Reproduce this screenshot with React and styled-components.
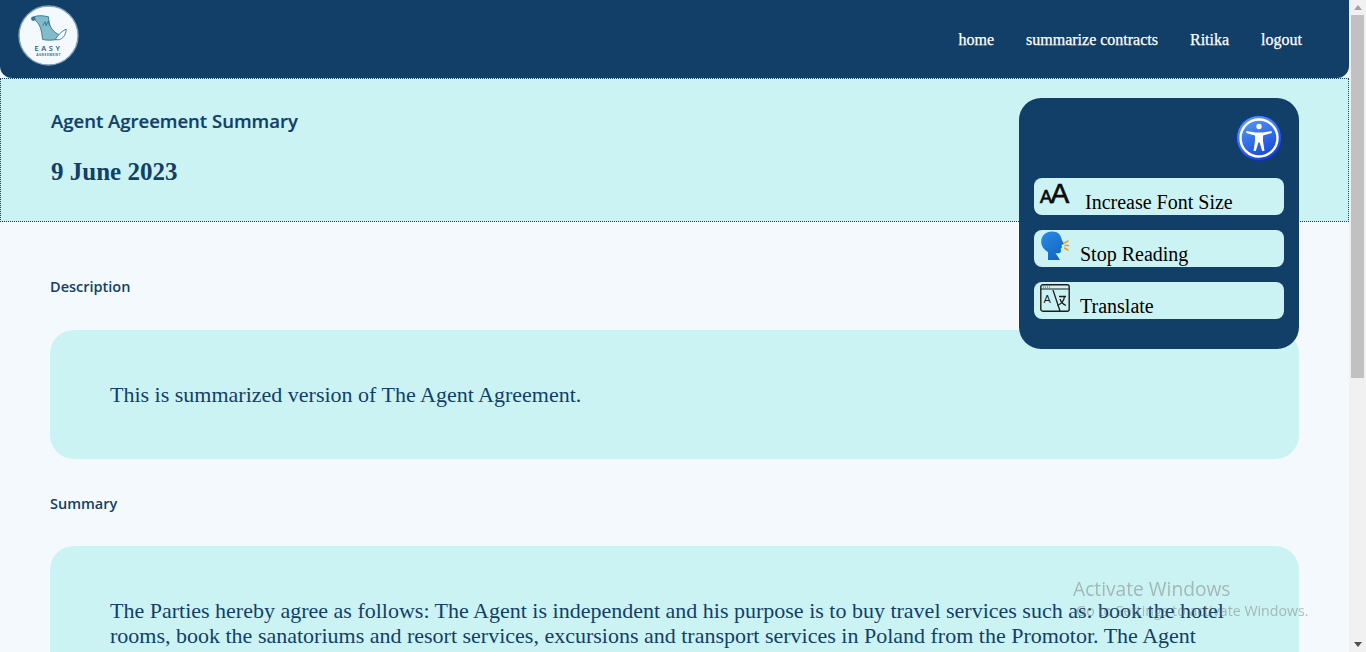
import React from "react";
import styled, { createGlobalStyle } from "styled-components";

const Global = createGlobalStyle`
  html, body { margin: 0; padding: 0; height: 100%; overflow: hidden; background: #f3f9fc; }
  #root { height: 100%; }
  * { box-sizing: border-box; }
`;

const navy = "#123f68";
const aqua = "#ccf3f4";
const serif = `"Liberation Serif", "Times New Roman", serif`;
const sans = `"Open Sans", "Noto Sans", sans-serif`;

const Shell = styled.div`
  display: flex;
  height: 652px;
  width: 1366px;
  overflow: hidden;
  position: relative;
`;
const Page = styled.main`
  flex: 1;
  min-width: 0;
  height: 652px;
  overflow: hidden;
  background: #f3f9fc;
  position: relative;
`;
const Scrollbar = styled.div`
  width: 17px;
  flex: none;
  background: #f1f1f1;
  display: flex;
  flex-direction: column;
  align-items: center;
`;
const ScrollThumb = styled.div`
  width: 13px;
  height: 363px;
  background: #c1c1c1;
  flex: none;
`;
const ArrowUp = styled.div`
  width: 0; height: 0;
  margin: 5px 0 5px;
  border-left: 4px solid transparent;
  border-right: 4px solid transparent;
  border-bottom: 5px solid #a3a3a3;
  flex: none;
`;
const ArrowDown = styled.div`
  width: 0; height: 0;
  margin-top: auto;
  margin-bottom: 5px;
  border-left: 4px solid transparent;
  border-right: 4px solid transparent;
  border-top: 5px solid #505050;
  flex: none;
`;

const Nav = styled.nav`
  height: 78px;
  background: ${navy};
  border-radius: 0 0 12px 12px;
  display: flex;
  align-items: flex-start;
  justify-content: space-between;
  padding: 5px 32px 0 18px;
`;
const NavLinks = styled.ul`
  display: flex;
  gap: 32px;
  list-style: none;
  margin: 0;
  padding: 26px 15px 0 0;
`;
const NavLink = styled.li`
  font: 500 16px/18px ${serif};
  -webkit-text-stroke: 0.25px #fff;
  color: #fff;
  white-space: nowrap;
`;

const Hero = styled.header`
  height: 144px;
  background: ${aqua};
  border: 1px dotted ${navy};
  padding: 29px 50px;
`;
const Title = styled.h1`
  margin: 0;
  font: 600 18.5px/25px ${sans};
  -webkit-text-stroke: 0.2px ${navy};
  color: ${navy};
`;
const DateLine = styled.h2`
  margin: 24px 0 0;
  font: 700 25px/30px ${serif};
  color: ${navy};
`;

const Content = styled.section`
  padding: 54px 50px 0;
`;
const Label = styled.h3`
  margin: 0 0 ${p => p.$gap}px;
  font: 600 14.5px/21px ${sans};
  color: ${navy};
`;
const Card = styled.div`
  background: ${aqua};
  border-radius: 24px;
  padding: 52px 60px;
  margin-bottom: 34px;
`;
const Body = styled.p`
  margin: 0;
  font: 400 22px/25px ${serif};
  color: ${navy};
`;

const Panel = styled.aside`
  position: absolute;
  top: 98px;
  left: 1019px;
  width: 280px;
  height: 251px;
  background: ${navy};
  border-radius: 22px;
  padding: 15px;
  display: flex;
  flex-direction: column;
`;
const Toggle = styled.button`
  align-self: flex-end;
  width: 46px;
  height: 46px;
  border: 0;
  padding: 0;
  margin: 2px 2px 17px 0;
  background: none;
  display: block;
`;
const Tools = styled.div`
  display: flex;
  flex-direction: column;
  gap: 15px;
`;
const Tool = styled.button`
  height: 37px;
  width: 250px;
  background: ${aqua};
  border: 0;
  border-radius: 8px;
  padding: 0 0 0 6px;
  display: flex;
  align-items: flex-start;
  color: #000;
  font: 400 20px/23px ${serif};
  text-align: left;
  overflow: visible;
`;
const ToolIcon = styled.span`
  width: 30px;
  height: 30px;
  flex: none;
  display: block;
  margin-top: ${p => p.$top}px;
`;
const ToolText = styled.span`
  margin-left: ${p => p.$gap}px;
  margin-top: 13px;
  white-space: nowrap;
`;
const BigA = styled.span`
  display: flex;
  align-items: baseline;
  color: #0b0b0b;
  font-family: "Liberation Sans", Arial, sans-serif;
  font-weight: 400;
  -webkit-text-stroke: 0.7px #0b0b0b;
  font-size: 28px;
  line-height: 24px;
  letter-spacing: -1.5px;
`;
const SmallA = styled.span`
  font-size: 18px;
`;

const Watermark = styled.div`
  position: fixed;
  left: 1073px;
  top: 577px;
  pointer-events: none;
  color: rgba(110, 110, 110, 0.45);
  font-family: ${sans};
`;
const WatermarkTitle = styled.div`
  font-size: 19.2px;
  line-height: 24px;
`;
const WatermarkSub = styled.div`
  font-size: 14.2px;
  line-height: 18px;
  margin-top: 1px;
  margin-left: 3px;
  white-space: nowrap;
`;

const Logo = () => (
  <svg width="61" height="61" viewBox="0 0 62 62" style={{ display: "block" }} aria-label="Easy Agreement">
    <circle cx="31" cy="31" r="30" fill="#f3f9fc" stroke="#7f9fb6" strokeWidth="1.4" />
    <path d="M16 12 C21 10 26 11 31 12 C31 18 33 24 37 27 C39 29 41 30 42 30 L40 35 C34 36 29 36 25 35 C24 29 24 21 18 16 Z" fill="#83bcc9" stroke="#2f7396" strokeWidth="0.9" />
    <circle cx="15.5" cy="14" r="2.2" fill="#2f7396" />
    <path d="M38 35 C41 30 44 27 49 24.5 C49 31 44 37 38 35 Z" fill="#f3f9fc" stroke="#2f7396" strokeWidth="0.9" />
    <path d="M25 21 l2.5 -4 1 4 2.5 -5 1 5" fill="none" stroke="#2f7396" strokeWidth="0.9" />
    <text x="31" y="46.5" textAnchor="middle" fontFamily="Open Sans, sans-serif" fontSize="7.6" fontWeight="600" letterSpacing="2.6" fill="#1f5578">EASY</text>
    <text x="31" y="52" textAnchor="middle" fontFamily="Open Sans, sans-serif" fontSize="3.4" fontWeight="700" letterSpacing="0.5" fill="#3d6f92">AGREEMENT</text>
  </svg>
);

const AccessIcon = () => (
  <svg width="46" height="46" viewBox="0 0 46 46" style={{ display: "block" }}>
    <defs>
      <linearGradient id="acc" x1="0.2" y1="0" x2="0.7" y2="1">
        <stop offset="0" stopColor="#5a9ff8" />
        <stop offset="1" stopColor="#1040d8" />
      </linearGradient>
    </defs>
    <circle cx="23" cy="23" r="22.5" fill="url(#acc)" stroke="#1232b8" strokeWidth="1" />
    <circle cx="23" cy="23" r="18.5" fill="none" stroke="#fff" strokeWidth="2.4" />
    <circle cx="23" cy="11.5" r="2.7" fill="#fff" />
    <path d="M10.5 16 L19 17.5 H27 L35.5 16 L35.8 18 L27 20.5 L27 26 L28.5 35.8 L26.2 36 L23.6 27.5 H22.4 L19.8 36 L17.5 35.8 L19 26 L19 20.5 L10.2 18 Z" fill="#fff" />
  </svg>
);

const SpeakIcon = () => (
  <svg width="30" height="30" viewBox="0 0 30 30" style={{ display: "block" }}>
    <defs>
      <linearGradient id="head" x1="0" y1="0" x2="0.6" y2="1">
        <stop offset="0" stopColor="#2a8ae6" />
        <stop offset="1" stopColor="#1468c4" />
      </linearGradient>
    </defs>
    <path d="M12 0.5 C18 0.5 21 4 21.5 8 L24 13 L21.5 14 L22 16.5 L20.8 17.5 L21 20 C21 22.5 18 22.5 15.5 22 L20 29 H8 L8 21 C3 18.5 1 14 1.2 10 C1.5 4.5 6 0.5 12 0.5 Z" fill="url(#head)" />
    <g stroke="#f29a1f" strokeWidth="1.5" strokeLinecap="round">
      <path d="M24.5 12 L28 10" />
      <path d="M25 14.5 L28.5 14.5" />
      <path d="M24.5 17 L28 19" />
    </g>
  </svg>
);

const TranslateIcon = () => (
  <svg width="30" height="30" viewBox="0 0 30 30" style={{ display: "block" }}>
    <rect x="0.8" y="0.8" width="28.4" height="26.4" rx="2" fill="none" stroke="#1d1d1d" strokeWidth="1.4" />
    <path d="M1 5 H29" stroke="#1d1d1d" strokeWidth="1" />
    <path d="M3 3 H10" stroke="#555" strokeWidth="1" strokeDasharray="1 1" />
    <path d="M13 6 L20 27" stroke="#1d1d1d" strokeWidth="1.3" />
    <text x="3.5" y="19" fontFamily="Liberation Sans, sans-serif" fontSize="11" fill="#1d1d1d">A</text>
    <path d="M19 12.5 H26 M24.5 12.5 C24 17 21 20 17.5 21.5 M20 15 C21 18 23.5 20.5 26 21.5" fill="none" stroke="#1d1d1d" strokeWidth="1.3" />
  </svg>
);

export default function App() {
  return (
    <Shell>
      <Global />
      <Page>
        <Nav>
          <Logo />
          <NavLinks>
            <NavLink>home</NavLink>
            <NavLink>summarize contracts</NavLink>
            <NavLink>Ritika</NavLink>
            <NavLink>logout</NavLink>
          </NavLinks>
        </Nav>
        <Hero>
          <Title>Agent Agreement Summary</Title>
          <DateLine>9 June 2023</DateLine>
        </Hero>
        <Content>
          <Label $gap={33}>Description</Label>
          <Card>
            <Body>This is summarized version of The Agent Agreement.</Body>
          </Card>
          <Label $gap={32}>Summary</Label>
          <Card>
            <Body>
              The Parties hereby agree as follows: The Agent is independent and his purpose is to buy travel services such as: book the hotel rooms, book the sanatoriums and resort services, excursions and transport services in Poland from the Promotor. The Agent
            </Body>
          </Card>
        </Content>
      </Page>
      <Scrollbar>
        <ArrowUp />
        <ScrollThumb />
        <ArrowDown />
      </Scrollbar>
      <Panel>
        <Toggle aria-label="Accessibility"><AccessIcon /></Toggle>
        <Tools>
          <Tool>
            <ToolIcon $top={4}><BigA><SmallA>A</SmallA>A</BigA></ToolIcon>
            <ToolText $gap={15}>Increase Font Size</ToolText>
          </Tool>
          <Tool>
            <ToolIcon $top={1}><SpeakIcon /></ToolIcon>
            <ToolText $gap={10}>Stop Reading</ToolText>
          </Tool>
          <Tool>
            <ToolIcon $top={2}><TranslateIcon /></ToolIcon>
            <ToolText $gap={10}>Translate</ToolText>
          </Tool>
        </Tools>
      </Panel>
      <Watermark>
        <WatermarkTitle>Activate Windows</WatermarkTitle>
        <WatermarkSub>Go to Settings to activate Windows.</WatermarkSub>
      </Watermark>
    </Shell>
  );
}
